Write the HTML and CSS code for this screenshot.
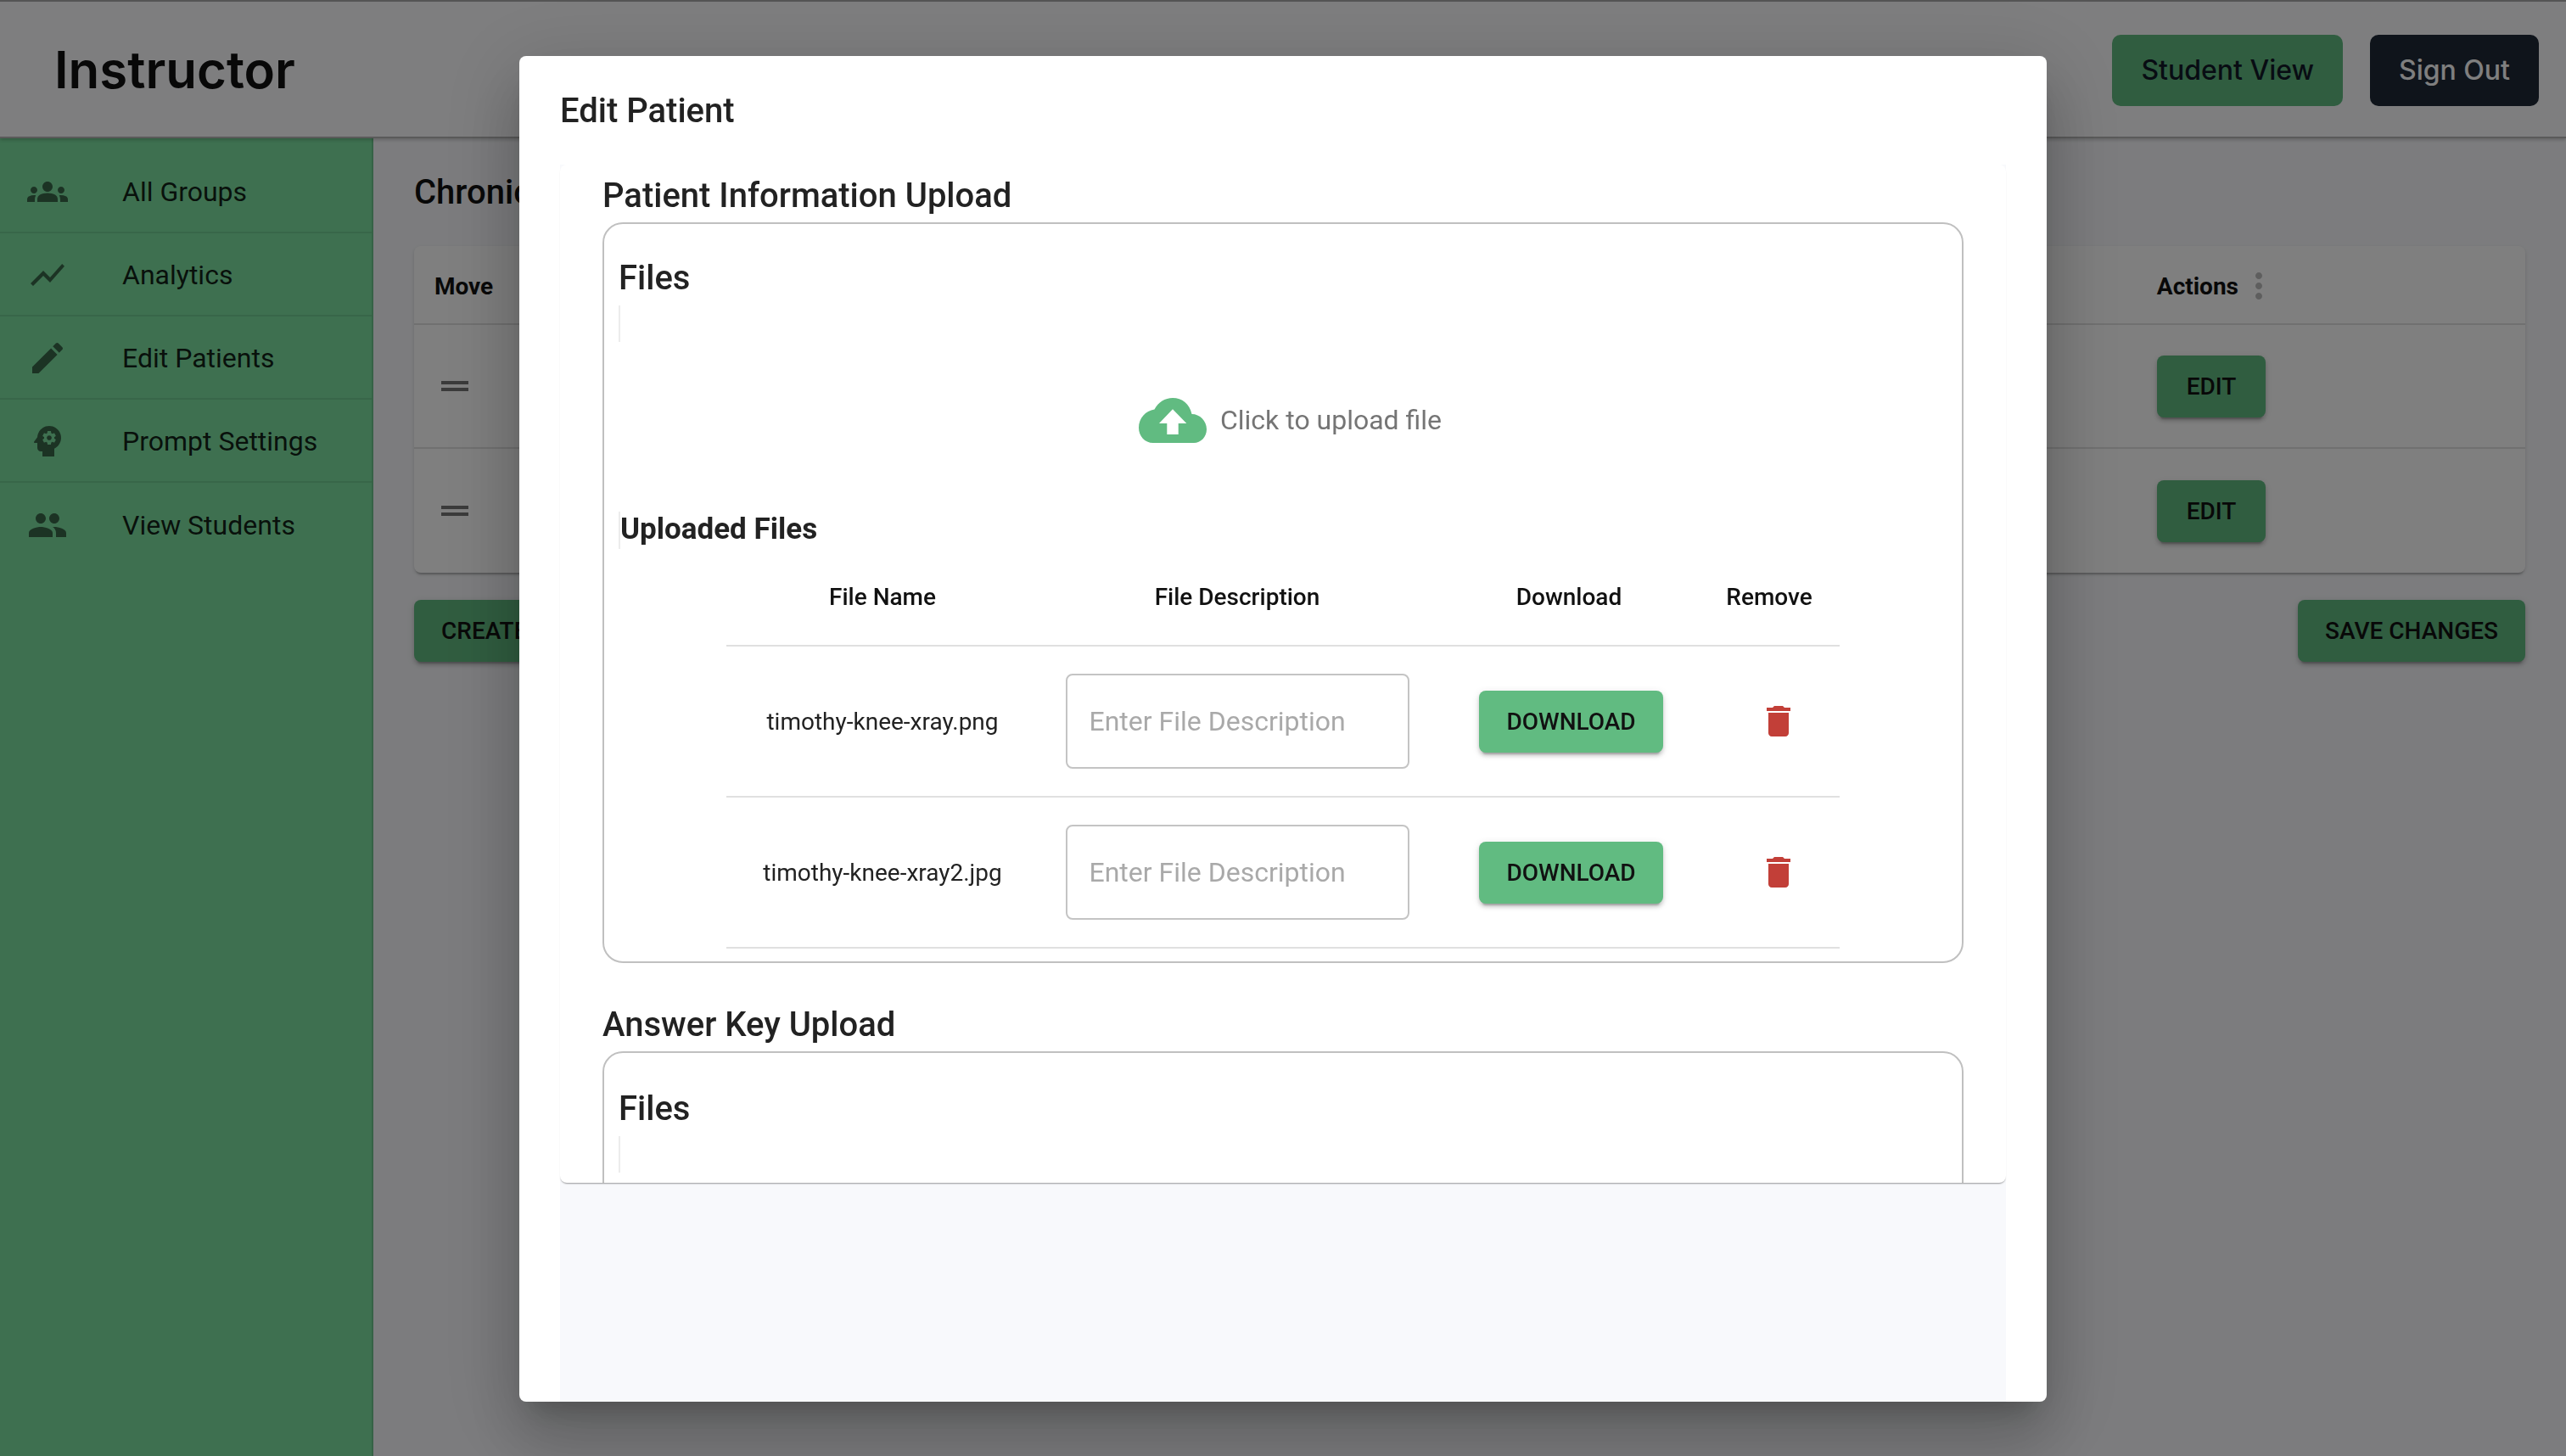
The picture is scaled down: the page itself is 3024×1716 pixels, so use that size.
FILE: index.html
```html
<html>

<head>
  <title>Instructor</title>
  <link rel="stylesheet" href="styles.css">
</head>

<body>

  <div class="page">
    <header class="topbar">
      <h1>Instructor</h1>
      <div class="topbar-actions">
        <button class="top-btn student">Student View</button>
        <button class="top-btn signout">Sign Out</button>
      </div>
    </header>

    <div class="layout">
      <nav class="sidebar">
        <a class="nav-item">
          <svg class="nav-icon" viewBox="0 0 24 24"><path d="M12 12.75c1.63 0 3.07.39 4.24.9 1.08.48 1.76 1.56 1.76 2.73V18H6v-1.61c0-1.18.68-2.26 1.76-2.73 1.17-.52 2.61-.91 4.24-.91zM4 13c1.1 0 2-.9 2-2s-.9-2-2-2-2 .9-2 2 .9 2 2 2zm1.13 1.1c-.37-.06-.74-.1-1.13-.1-.99 0-1.93.21-2.78.58C.48 14.9 0 15.62 0 16.43V18h4.5v-1.61c0-.83.23-1.61.63-2.29zM20 13c1.1 0 2-.9 2-2s-.9-2-2-2-2 .9-2 2 .9 2 2 2zm4 3.43c0-.81-.48-1.53-1.22-1.85-.85-.37-1.79-.58-2.78-.58-.39 0-.76.04-1.13.1.4.68.63 1.46.63 2.29V18H24v-1.57zM12 6c1.66 0 3 1.34 3 3s-1.34 3-3 3-3-1.34-3-3 1.34-3 3-3z"/></svg>
          <span>All Groups</span>
        </a>
        <a class="nav-item">
          <svg class="nav-icon" viewBox="0 0 24 24"><path d="M3.5 18.49l6-6.01 4 4L22 6.92l-1.41-1.41-7.09 7.97-4-4L2 16.99z"/></svg>
          <span>Analytics</span>
        </a>
        <a class="nav-item">
          <svg class="nav-icon" viewBox="0 0 24 24"><path d="M3 17.25V21h3.75L17.81 9.94l-3.75-3.75L3 17.25zM20.71 7.04c.39-.39.39-1.02 0-1.41l-2.34-2.34c-.39-.39-1.02-.39-1.41 0l-1.83 1.83 3.75 3.75 1.83-1.83z"/></svg>
          <span>Edit Patients</span>
        </a>
        <a class="nav-item">
          <svg class="nav-icon" viewBox="0 0 24 24"><path d="M13 8.57c-.79 0-1.43.64-1.43 1.43s.64 1.43 1.43 1.43 1.43-.64 1.43-1.43-.64-1.43-1.43-1.43z"/><path d="M13 3C9.25 3 6.2 5.94 6.02 9.64L4.1 12.2c-.25.33-.01.8.4.8H6v3c0 1.1.9 2 2 2h1v3h7v-4.68c2.36-1.12 4-3.53 4-6.32 0-3.87-3.13-7-7-7zm3 7c0 .13-.01.26-.02.39l.83.66c.08.06.1.16.05.25l-.8 1.39c-.05.09-.16.12-.24.09l-.99-.4c-.21.16-.43.29-.67.39L14 13.83c-.01.1-.1.17-.2.17h-1.6c-.1 0-.18-.07-.2-.17l-.15-1.06c-.25-.1-.47-.23-.68-.39l-.99.4c-.09.03-.2 0-.25-.09l-.8-1.39c-.05-.08-.03-.19.05-.25l.84-.66c-.01-.13-.02-.26-.02-.39s.02-.27.04-.39l-.85-.66c-.08-.06-.1-.16-.05-.26l.8-1.38c.05-.09.15-.12.24-.09l1 .4c.2-.15.43-.29.67-.39L12 6.17c.02-.1.1-.17.2-.17h1.6c.1 0 .18.07.2.17l.15 1.06c.24.1.46.23.67.39l1-.4c.09-.03.2 0 .24.09l.8 1.38c.05.09.03.2-.05.26l-.85.66c.03.12.04.25.04.39z"/></svg>
          <span>Prompt Settings</span>
        </a>
        <a class="nav-item last">
          <svg class="nav-icon" viewBox="0 0 24 24"><path d="M16 11c1.66 0 2.99-1.34 2.99-3S17.66 5 16 5c-1.66 0-3 1.34-3 3s1.34 3 3 3zm-8 0c1.66 0 2.99-1.34 2.99-3S9.66 5 8 5C6.34 5 5 6.34 5 8s1.34 3 3 3zm0 2c-2.33 0-7 1.17-7 3.5V19h14v-2.5c0-2.33-4.67-3.5-7-3.5zm8 0c-.29 0-.62.02-.97.05 1.16.84 1.97 1.97 1.97 3.45V19h6v-2.5c0-2.33-4.67-3.5-7-3.5z"/></svg>
          <span>View Students</span>
        </a>
      </nav>

      <main class="content">
        <h2>Chronic Pain</h2>
        <div class="patients">
          <div class="patients-row head">
            <span>Move</span>
            <span class="actions-head">Actions
              <svg class="dots" viewBox="0 0 24 24"><path d="M12 8c1.1 0 2-.9 2-2s-.9-2-2-2-2 .9-2 2 .9 2 2 2zm0 2c-1.1 0-2 .9-2 2s.9 2 2 2 2-.9 2-2-.9-2-2-2zm0 6c-1.1 0-2 .9-2 2s.9 2 2 2 2-.9 2-2-.9-2-2-2z"/></svg>
            </span>
          </div>
          <div class="patients-row">
            <svg class="handle" viewBox="0 0 24 24"><path d="M20 9H4v2h16V9zM4 15h16v-2H4v2z"/></svg>
            <button class="btn">EDIT</button>
          </div>
          <div class="patients-row">
            <svg class="handle" viewBox="0 0 24 24"><path d="M20 9H4v2h16V9zM4 15h16v-2H4v2z"/></svg>
            <button class="btn">EDIT</button>
          </div>
        </div>
        <div class="content-actions">
          <button class="btn">CREATE NEW PATIENT</button>
          <button class="btn">SAVE CHANGES</button>
        </div>
      </main>
    </div>
  </div>

  <div class="overlay">
    <section class="dialog">
      <h2 class="dialog-title">Edit Patient</h2>
      <div class="dialog-body">
        <div class="sheet">
          <h3>Patient Information Upload</h3>
          <div class="upload-box">
            <h3 class="files-title">Files</h3>
            <div class="tick"></div>
            <div class="dropzone">
              <svg class="cloud" viewBox="0 0 80 53"><path d="M17 53C7 53 0 45 0 35 0 24 8 15 18.500 13.500 23 5 31 0 40 0 51 0 60 7 62.500 19 72 19 80 27 80 37 80 46 73 53 65 53Z"/><path class="arrow" d="M40 13.300 56.300 30H46.700V43H33.300V30H24Z"/></svg>
              <span>Click to upload file</span>
            </div>
            <h4 class="uploaded-title">Uploaded Files</h4>
            <table class="files">
              <thead>
                <tr><th class="c-name">File Name</th><th class="c-desc">File Description</th><th class="c-get">Download</th><th class="c-del">Remove</th></tr>
              </thead>
              <tbody>
                <tr>
                  <td>timothy-knee-xray.png</td>
                  <td><input class="desc" placeholder="Enter File Description"></td>
                  <td><button class="btn download">DOWNLOAD</button></td>
                  <td class="trash-cell"><svg class="trash" viewBox="0 0 24 24"><path d="M6 19c0 1.100.9 2 2 2h8c1.100 0 2-.9 2-2V7H6v12zM19 4h-3.500l-1-1h-5l-1 1H5v2h14V4z"/></svg></td>
                </tr>
                <tr>
                  <td>timothy-knee-xray2.jpg</td>
                  <td><input class="desc" placeholder="Enter File Description"></td>
                  <td><button class="btn download">DOWNLOAD</button></td>
                  <td class="trash-cell"><svg class="trash" viewBox="0 0 24 24"><path d="M6 19c0 1.100.9 2 2 2h8c1.100 0 2-.9 2-2V7H6v12zM19 4h-3.500l-1-1h-5l-1 1H5v2h14V4z"/></svg></td>
                </tr>
              </tbody>
            </table>
          </div>

          <h3 class="second">Answer Key Upload</h3>
          <div class="upload-box answer">
            <h3 class="files-title">Files</h3>
            <div class="tick"></div>
          </div>
        </div>
      </div>
    </section>
  </div>

</body>

</html>
```

FILE: styles.css
```css
* {
  box-sizing: border-box;
}

html,
body {
  margin: 0;
  height: 100%;
  overflow: hidden;
}

body {
  font-family: Roboto, "Liberation Sans", sans-serif;
  color: #111;
  background-color: #f8f9fc;
}

h1,
h2,
h3,
h4 {
  margin: 0;
}

button {
  font-family: inherit;
  border: 0;
}

.page {
  height: 100vh;
  display: flex;
  flex-direction: column;
}

/* top bar */
.topbar {
  height: 163px;
  flex: none;
  display: flex;
  align-items: center;
  justify-content: space-between;
  padding: 0 32px 0 64px;
  background-color: #fdfdff;
  border-top: 2px solid #aaa;
  border-bottom: 2px solid #b5b5b5;
  box-shadow: 0 2px 4px rgba(0, 0, 0, 0.2);
  position: relative;
  z-index: 1;
}

.topbar h1 {
  font-family: Inter, sans-serif;
  font-size: 60px;
  font-weight: 600;
  color: #111;
}

.topbar-actions {
  display: flex;
  gap: 32px;
  margin-top: 2px;
}

.top-btn {
  height: 84px;
  padding: 0 34px;
  border-radius: 10px;
  font-family: Inter, sans-serif;
  font-size: 32px;
  font-weight: 500;
}

.top-btn.student {
  background-color: #61bb81;
  color: #111827;
}

.top-btn.signout {
  background-color: #1f2937;
  color: #fff;
}

.layout {
  flex: 1;
  display: flex;
  min-height: 0;
}

/* side nav */
.sidebar {
  width: 440px;
  flex: none;
  padding-top: 14px;
  background-color: #7ce0a0;
  border-right: 2px solid #6cc48c;
}

.nav-item {
  height: 98px;
  display: flex;
  align-items: center;
  padding: 1px 0 0 32px;
  font-size: 32px;
  color: rgba(0, 0, 0, 0.87);
  border-bottom: 2px solid #70cc92;
}

.nav-item.last {
  border-bottom: 0;
}

.nav-icon {
  width: 48px;
  height: 48px;
  margin-right: 64px;
  fill: rgba(0, 0, 0, 0.54);
}

/* patients table */
.content {
  flex: 1;
  padding: 32px 48px 0;
}

.content h2 {
  font-size: 40px;
  font-weight: 500;
  line-height: 64px;
}

.patients {
  margin-top: 31px;
  background-color: #fff;
  border-radius: 8px;
  box-shadow: 0 4px 2px -2px rgba(0, 0, 0, 0.2), 0 2px 4px rgba(0, 0, 0, 0.14);
}

.patients-row {
  height: 146px;
  display: flex;
  align-items: center;
  justify-content: space-between;
  padding: 0 306px 0 24px;
  border-bottom: 2px solid #e0e0e0;
}

.patients-row:last-child {
  border-bottom: 0;
}

.patients-row.head {
  height: 93px;
  padding: 3px 298px 0 24px;
  font-size: 28px;
  font-weight: 700;
}

.actions-head {
  display: flex;
  align-items: center;
  margin-right: -8px;
}

.dots {
  width: 48px;
  height: 48px;
  fill: #bdbdbd;
}

.handle {
  width: 48px;
  height: 48px;
  fill: rgba(0, 0, 0, 0.54);
}

.btn {
  min-width: 128px;
  height: 73px;
  padding: 0 32px;
  border-radius: 8px;
  background-color: #61bb81;
  color: #111;
  font-size: 28px;
  font-weight: 500;
  box-shadow: 0 6px 2px -4px rgba(0, 0, 0, 0.2), 0 4px 4px rgba(0, 0, 0, 0.14), 0 2px 10px rgba(0, 0, 0, 0.12);
}

.content-actions {
  display: flex;
  justify-content: space-between;
  margin-top: 32px;
}

/* modal */
.overlay {
  position: fixed;
  top: 0;
  left: 0;
  width: 100%;
  height: 100%;
  z-index: 10;
  display: flex;
  align-items: center;
  justify-content: center;
  background-color: rgba(0, 0, 0, 0.5);
}

.dialog {
  width: 1800px;
  height: 1586px;
  margin-top: 2px;
  display: flex;
  flex-direction: column;
  background-color: #fff;
  border-radius: 8px;
  box-shadow: 0 22px 30px -14px rgba(0, 0, 0, 0.2), 0 48px 76px 6px rgba(0, 0, 0, 0.14), 0 18px 92px 16px rgba(0, 0, 0, 0.12);
}

.dialog-title {
  flex: none;
  padding: 33px 48px 31px;
  font-size: 40px;
  font-weight: 500;
  line-height: 64px;
  color: #222;
}

.dialog-body {
  flex: 1;
  min-height: 0;
  margin: 0 48px;
  background-color: #f8f9fc;
}

.sheet {
  height: 1200px;
  overflow: hidden;
  padding: 5px 50px 0;
  background-color: #fff;
  border-radius: 8px;
  box-shadow: 0 2px 2px -1px rgba(0, 0, 0, 0.4);
}

.sheet h3 {
  font-size: 40px;
  font-weight: 500;
  line-height: 63px;
  color: #222;
}

.sheet h3.second {
  margin-top: 41px;
}

.upload-box {
  padding: 32px 16px 15px 17px;
  border: 2px solid #c0c0c0;
  border-radius: 24px;
}

.upload-box.answer {
  min-height: 600px;
  padding-top: 34px;
}

.tick {
  width: 2px;
  height: 43px;
  margin-top: 1px;
  background-color: #ececec;
}

.dropzone {
  height: 200px;
  display: flex;
  align-items: center;
  justify-content: center;
  gap: 16px;
  padding: 0 0 16px 16px;
  font-size: 32px;
  color: #757575;
}

.cloud {
  width: 80px;
  height: 53px;
  fill: #61bb81;
}

.cloud .arrow {
  fill: #fff;
}

.uploaded-title {
  height: 44px;
  border-left: 2px solid #ececec;
  font-size: 35px;
  font-weight: 700;
  line-height: 42px;
  color: #222;
}

.files {
  width: 1312px;
  margin: 0 0 0 127px;
  border-collapse: collapse;
  table-layout: fixed;
  font-size: 28px;
}

.files th {
  height: 114px;
  font-weight: 500;
  border-bottom: 2px solid #e0e0e0;
  padding: 0;
}

.files td {
  height: 178px;
  text-align: center;
  border-bottom: 2px solid #e0e0e0;
  padding: 0;
  color: #222;
}

.c-name {
  width: 368px;
}

.c-desc {
  width: 468px;
}

.c-get {
  width: 314px;
}

.c-del {
  width: 162px;
}

.files th.c-del {
  padding-right: 4px;
}

.desc {
  width: 405px;
  height: 112px;
  padding: 0 26px;
  border: 2px solid #c4c4c4;
  border-radius: 8px;
  font-family: inherit;
  font-size: 32px;
}

.desc::placeholder {
  color: #a9a9a9;
}

.btn.download {
  width: 217px;
  margin-left: 5px;
  padding: 0;
}

.files td.trash-cell {
  padding-left: 18px;
}

.trash {
  width: 48px;
  height: 48px;
  fill: #c23f38;
  display: block;
  margin: 0 auto;
}
```
